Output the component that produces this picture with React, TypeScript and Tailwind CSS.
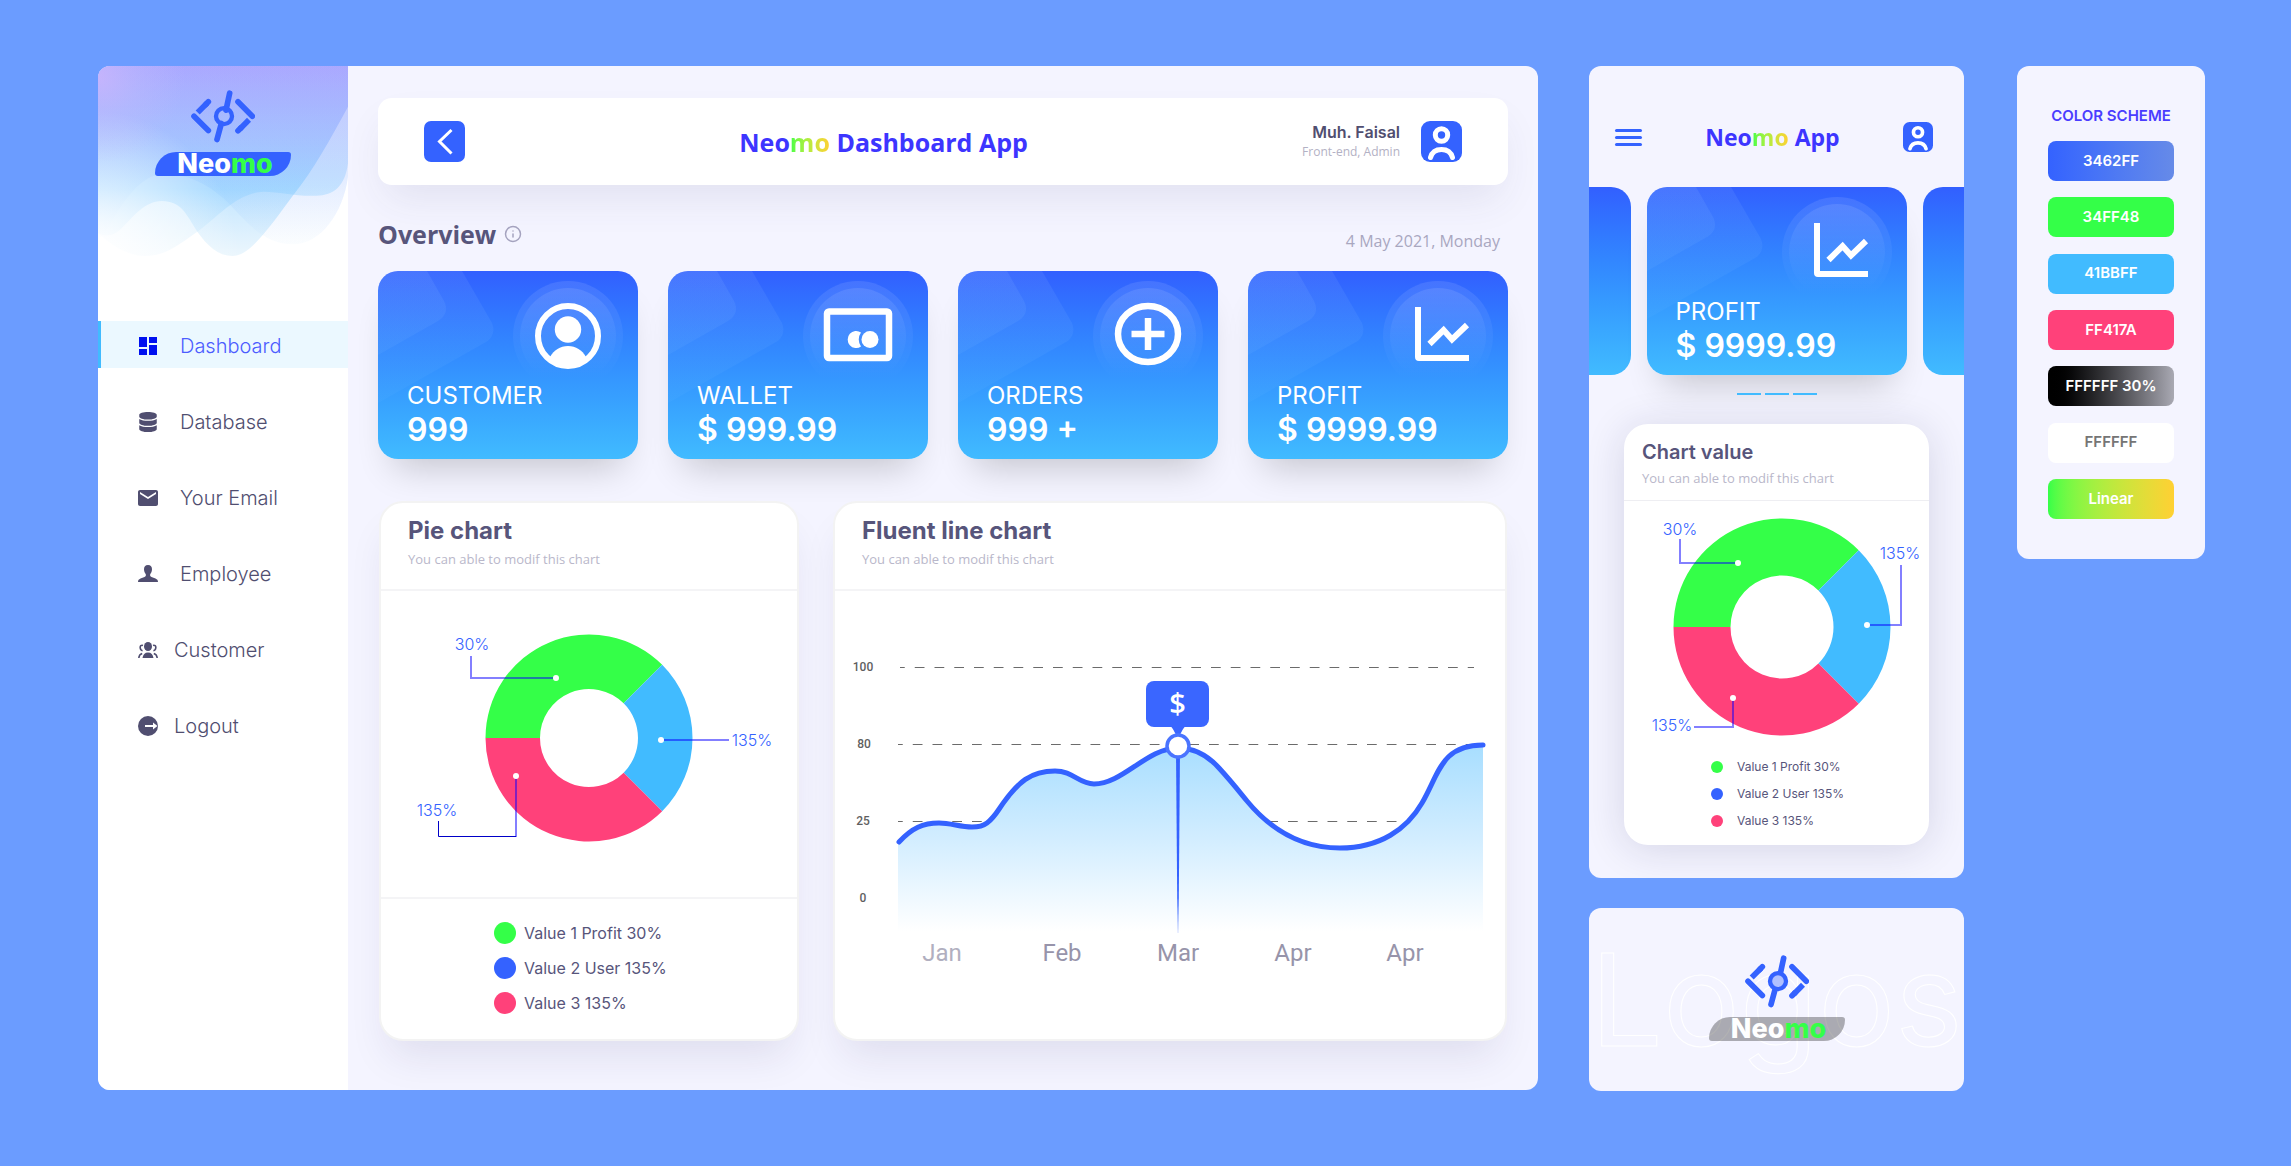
import React from "react";
import { MdDashboard, MdEmail } from "react-icons/md";
import { FaDatabase } from "react-icons/fa";
import { Info } from "lucide-react";

function LogoMark({ core }: { core: string }) {
  return (
    <svg viewBox="0 0 192 158" className="h-[53px] w-16" fill="none" stroke="#3462ff" strokeWidth="17" strokeLinecap="round">
      <path d="M116 9L105 60M91 100L78 148" />
      <circle cx="99" cy="78" r="24" strokeWidth="13" fill={core} />
      <path d="M52 35L44 43M52 121L9 78" />
      <path d="M48 39L20 67" strokeLinecap="butt" />
      <path d="M141 35L184 78M141 122L150 113" />
      <path d="M146 117L174 89" strokeLinecap="butt" />
    </svg>
  );
}

function Logo({ plate, core }: { plate: string; core: string }) {
  return (
    <div className="flex flex-col items-center">
      <LogoMark core={core} />
      <div className={"mt-[9px] flex h-6 w-[136px] items-center justify-center rounded-tl-[22px] rounded-tr-[3px] rounded-br-[22px] rounded-bl-[3px] pl-1 " + plate}>
        <span className="text-[27px] leading-6 font-extrabold text-white">
          Neo<span className="text-[#34ff48]">mo</span>
        </span>
      </div>
    </div>
  );
}

function SidebarWaves() {
  const a = "M24 18H774V140C720 240 670 330 610 405C540 500 480 588 428 588C385 588 350 555 322 515C290 465 275 423 215 423C165 423 130 470 95 505C70 530 45 530 24 520Z";
  const b = "M24 18H774V310C765 380 730 407 680 407C610 409 570 395 520 395C440 400 390 465 322 515C270 552 225 588 165 588C110 588 65 555 24 520Z";
  const c = "M24 18H774V350C760 460 690 553 610 553C510 553 460 470 400 415C350 370 290 340 215 343C140 348 85 450 45 520L24 540Z";
  return (
    <svg viewBox="24 18 750 570" className="block w-full" aria-hidden="true">
      <defs>
        <linearGradient id="wave" x1="0" y1="0" x2="0" y2="1">
          <stop offset="0" stopColor="#8a88ff" />
          <stop offset="0.4" stopColor="#80acff" />
          <stop offset="0.65" stopColor="#78c6ff" />
          <stop offset="1" stopColor="#d4ecfa" />
        </linearGradient>
        <linearGradient id="waveSoft" x1="0" y1="0" x2="0" y2="1">
          <stop offset="0" stopColor="#b9b4ff" />
          <stop offset="0.6" stopColor="#c9ccff" />
          <stop offset="1" stopColor="#ffffff" />
        </linearGradient>
        <radialGradient id="fadeLeft" gradientUnits="userSpaceOnUse" cx="0" cy="600" r="450">
          <stop offset="0" stopColor="#fff" />
          <stop offset="0.2" stopColor="#fff" stopOpacity="0.85" />
          <stop offset="1" stopColor="#fff" stopOpacity="0" />
        </radialGradient>
        <radialGradient id="blush" gradientUnits="userSpaceOnUse" cx="24" cy="50" r="260">
          <stop offset="0" stopColor="#ccb6fc" stopOpacity="0.8" />
          <stop offset="0.5" stopColor="#c4bafc" stopOpacity="0.35" />
          <stop offset="1" stopColor="#c4bafc" stopOpacity="0" />
        </radialGradient>
      </defs>
      <path d={c} fill="url(#waveSoft)" opacity="0.3" />
      <path d={b} fill="url(#wave)" opacity="0.32" />
      <path d={a} fill="url(#wave)" opacity="0.45" />
      <path d={c} fill="url(#wave)" opacity="0.1" />
      <rect x="24" y="18" width="750" height="570" fill="url(#fadeLeft)" />
      <rect x="24" y="18" width="750" height="570" fill="url(#blush)" />
    </svg>
  );
}

function EmployeeIcon() {
  return (
    <svg viewBox="0 0 20 17" width="20" height="17" fill="currentColor">
      <path d="M10 0C12.800 0 14 1.800 14 4.200C14 6.500 13 8 12.200 9.200C11.900 10.600 12.300 11.300 13.500 11.900L17.500 13.600C19.200 14.400 20 15.300 20 17H0C0 15.300 .8 14.400 2.500 13.600L6.500 11.900C7.700 11.300 8.100 10.600 7.800 9.200C7 8 6 6.500 6 4.200C6 1.800 7.200 0 10 0Z" />
    </svg>
  );
}

function CustomerIcon() {
  return (
    <svg viewBox="0 0 20 16" width="20" height="16" fill="currentColor">
      <ellipse cx="10" cy="4.500" rx="4" ry="4.500" />
      <path d="M4.500 16C5 12.500 6.800 10.500 10 10.500S15 12.500 15.500 16Z" />
      <path d="M5 3.400C3.200 2.800 2 4 2.200 5.800C2.300 7.300 3.200 8.500 4.600 8.700M15 3.400C16.800 2.800 18 4 17.800 5.800C17.700 7.300 16.800 8.500 15.400 8.700M.8 16C1 13.500 2.200 12 4.200 11.400M19.200 16C19 13.500 17.800 12 15.800 11.400" fill="none" stroke="currentColor" strokeWidth="1.600" />
    </svg>
  );
}

function LogoutIcon() {
  return (
    <svg viewBox="0 0 20 20" width="20" height="20">
      <circle cx="10" cy="10" r="10" fill="currentColor" />
      <path d="M7 9H15V6.500L19.500 10L15 13.500V11H7Z" fill="#fff" />
    </svg>
  );
}

const navItems = [
  { label: "Dashboard", icon: <MdDashboard size={24} color="#0010f0" />, active: true, tight: false },
  { label: "Database", icon: <FaDatabase size={20} />, active: false, tight: false },
  { label: "Your Email", icon: <MdEmail size={24} />, active: false, tight: false },
  { label: "Employee", icon: <EmployeeIcon />, active: false, tight: false },
  { label: "Customer", icon: <CustomerIcon />, active: false, tight: true },
  { label: "Logout", icon: <LogoutIcon />, active: false, tight: true },
];

function Sidebar() {
  return (
    <aside className="flex w-[250px] shrink-0 flex-col bg-white">
      <div className="relative">
        <SidebarWaves />
        <div className="absolute inset-x-0 top-6 flex justify-center">
          <Logo plate="bg-[#3462ff]" core="none" />
        </div>
      </div>
      <nav className="mt-[65px] flex flex-col gap-[29px]">
        {navItems.map((n) => (
          <a
            key={n.label}
            href="#"
            className={
              "flex h-[47px] items-center border-l-[3px] pt-0.5 pl-[35px] text-xl font-light " +
              (n.active ? "border-[#41bbff] bg-[#ebf8ff] text-[#4c5cff]" : "border-transparent text-[#504e70]")
            }
          >
            <span className="flex w-6 justify-center">{n.icon}</span>
            <span className={n.tight ? "ml-[14px]" : "ml-5"}>{n.label}</span>
          </a>
        ))}
      </nav>
    </aside>
  );
}

function Brand({ rest, className }: { rest: string; className: string }) {
  return (
    <h1 className={"font-['Open_Sans',sans-serif] font-bold text-[#3d35ff] " + className}>
      Neo
      <span className="bg-linear-to-r from-[#34ff48] to-[#ffd033] bg-clip-text text-transparent">mo</span> {rest}
    </h1>
  );
}

function Avatar({ className }: { className: string }) {
  return (
    <button aria-label="Profile" className={className}>
      <svg viewBox="0 0 41 41" className="block h-full w-full">
        <rect width="41" height="41" rx="9" fill="#3462ff" />
        <circle cx="20.500" cy="14" r="6.200" fill="none" stroke="#fff" strokeWidth="5" />
        <path d="M9.500 36.500C11 31 15 28.500 20.500 28.500S30 31 31.500 36.500" fill="none" stroke="#fff" strokeWidth="5" strokeLinecap="round" />
      </svg>
    </button>
  );
}

type IconName = "customer" | "wallet" | "orders" | "profit";

function StatArt({ icon }: { icon: IconName }) {
  return (
    <svg viewBox="0 0 260 188" className="absolute top-0 right-0 h-[188px] w-[260px]" aria-hidden="true">
      <defs>
        <linearGradient id="halo" x1="0" y1="0" x2="0" y2="1">
          <stop offset="0" stopColor="#fff" stopOpacity="0.1" />
          <stop offset="0.9" stopColor="#fff" stopOpacity="0" />
        </linearGradient>
      </defs>
      <circle cx="190" cy="65" r="55" fill="url(#halo)" />
      <circle cx="190" cy="65" r="48" fill="url(#halo)" />
      {icon === "customer" && (
        <g>
          <circle cx="190" cy="65" r="30" fill="none" stroke="#fff" strokeWidth="6" />
          <circle cx="190" cy="58.500" r="13.200" fill="#fff" />
          <path d="M172 86C176 79 182 75 190 75S204 79 208 86L206 92L190 97L174 92Z" fill="#fff" />
        </g>
      )}
      {icon === "wallet" && (
        <g>
          <rect x="159" y="40.500" width="62" height="46.500" rx="2" fill="none" stroke="#fff" strokeWidth="6.500" />
          <path d="M193 61.500A8.500 8.500 0 1 0 193 75.500A12 12 0 0 1 193 61.500Z" fill="#fff" />
          <circle cx="202" cy="68.500" r="8.500" fill="#fff" />
        </g>
      )}
      {icon === "orders" && (
        <g fill="none" stroke="#fff" strokeWidth="6.500">
          <ellipse cx="190" cy="63" rx="30" ry="28" />
          <path d="M190 47V79M173.500 63H206.500" />
        </g>
      )}
      {icon === "profit" && (
        <g fill="none" stroke="#fff" strokeWidth="6">
          <path d="M170 36V86Q170 87 171 87H221" />
          <path d="M181.500 73L195.600 59L204 68.500L219 54" />
        </g>
      )}
    </svg>
  );
}

function StatCard({ label, value, icon }: { label: string; value: string; icon: IconName }) {
  return (
    <article className="relative h-[188px] overflow-hidden rounded-[20px] bg-linear-to-b from-[#325fff] to-[#41bbff] text-white">
      <svg viewBox="0 0 260 188" className="absolute top-0 left-0 h-[188px] w-[260px]" aria-hidden="true">
        <defs>
          <linearGradient id="facet" gradientUnits="userSpaceOnUse" x1="0" y1="0" x2="0" y2="130">
            <stop offset="0" stopColor="#c8f0ff" stopOpacity="0.08" />
            <stop offset="1" stopColor="#c8f0ff" stopOpacity="0.03" />
          </linearGradient>
        </defs>
        <path d="M0 0H84L114 52C117 59 115 67 108 71L0 132Z" fill="url(#facet)" />
        <path d="M0 0H49L66 30C70 38 68 45 60 50L0 84Z" fill="url(#facet)" />
      </svg>
      <StatArt icon={icon} />
      <div className="relative pt-[110px] pl-[29px]">
        <p className="text-2xl leading-[30px]">{label}</p>
        <p className="text-[32px] leading-[38px] font-semibold whitespace-pre">{value}</p>
      </div>
    </article>
  );
}

const GREEN = "#34ff48";
const SKY = "#41bbff";
const PINK = "#ff417a";

function Donut({ outer, inner }: { outer: number; inner: number }) {
  const o = outer * Math.SQRT1_2;
  const i = inner * Math.SQRT1_2;
  return (
    <g>
      <path d={`M${-outer} 0A${outer} ${outer} 0 0 1 ${o} ${-o}L${i} ${-i}A${inner} ${inner} 0 0 0 ${-inner} 0Z`} fill={GREEN} />
      <path d={`M${o} ${-o}A${outer} ${outer} 0 0 1 ${o} ${o}L${i} ${i}A${inner} ${inner} 0 0 0 ${i} ${-i}Z`} fill={SKY} />
      <path d={`M${o} ${o}A${outer} ${outer} 0 0 1 ${-outer} 0H${-inner}A${inner} ${inner} 0 0 0 ${i} ${i}Z`} fill={PINK} />
    </g>
  );
}

function PieChart() {
  return (
    <svg viewBox="-208 -147 416 306" className="block w-full" role="img" aria-label="Pie chart">
      <Donut outer={103.5} inner={49} />
      <g fill="none" stroke="#0800ff" strokeOpacity="0.5" strokeWidth="2">
        <path d="M-118 -82V-60H-36" />
        <path d="M75 2H140" />
        <path d="M-73 99V41" />
      </g>
      <path d="M-150.500 83V98.500H-73" fill="none" stroke="#0000c8" />
      <g fill="#fff">
        <circle cx="-33" cy="-60" r="3" />
        <circle cx="72" cy="2" r="3" />
        <circle cx="-73" cy="38" r="3" />
      </g>
      <g fill="#3462ff" fontSize="16" fontWeight="300" textAnchor="middle">
        <text x="-117" y="-88">30%</text>
        <text x="163" y="8">135%</text>
        <text x="-152" y="78">135%</text>
      </g>
    </svg>
  );
}

function MobilePieChart() {
  return (
    <svg viewBox="-158 -126 305 248" className="block w-full" role="img" aria-label="Chart value">
      <Donut outer={108.5} inner={51.5} />
      <g fill="none" stroke="#0800ff" strokeOpacity="0.5" strokeWidth="2">
        <path d="M-102 -88V-64H-47" />
        <path d="M119 -62V-2H87" />
        <path d="M-88 100H-49V73" />
      </g>
      <g fill="#fff">
        <circle cx="-44" cy="-64" r="3" />
        <circle cx="85" cy="-2" r="3" />
        <circle cx="-49" cy="71" r="3" />
      </g>
      <g fill="#3462ff" fontSize="16" fontWeight="300" textAnchor="middle">
        <text x="-102" y="-92">30%</text>
        <text x="118" y="-68">135%</text>
        <text x="-110" y="104">135%</text>
      </g>
    </svg>
  );
}

const curve =
  "M64 251C77 237 88 232 104 232C116 232 125 236 137 236C143 236 148 235 152 232C160 226 163 219 169 211C183 192 195 180 220 180C238 180 244 193 259 193C288 193 312 157 343 157C362 157 375 167 384 177C396 190 403 199 412 210C436 239 466 257 505 257C545 257 572 238 587 212C604 183 606 154 648 154";

function LineChart() {
  return (
    <svg viewBox="0 0 670 448" className="block w-full" role="img" aria-label="Fluent line chart">
      <defs>
        <linearGradient id="area" gradientUnits="userSpaceOnUse" x1="0" y1="155" x2="0" y2="340">
          <stop offset="0" stopColor="#a8deff" />
          <stop offset="0.5" stopColor="#d2edff" />
          <stop offset="1" stopColor="#ffffff" />
        </linearGradient>
        <linearGradient id="needle" gradientUnits="userSpaceOnUse" x1="0" y1="164" x2="0" y2="342">
          <stop offset="0.800" stopColor="#3462ff" />
          <stop offset="1" stopColor="#3462ff" stopOpacity="0.2" />
        </linearGradient>
      </defs>
      <g stroke="#6b6b6b" strokeWidth="1" strokeDasharray="9.750 10" strokeDashoffset="5">
        <path d="M65 76.500H639" />
        <path d="M63 153.500H636" />
        <path d="M63 230.500H600" />
      </g>
      <path d={curve + "V342H63V251Z"} fill="url(#area)" />
      <path d="M341 160H345L343.500 342H342.500Z" fill="url(#needle)" />
      <path d={curve} fill="none" stroke="#3462ff" strokeWidth="5" strokeLinecap="round" />
      <rect x="311" y="90" width="63" height="46" rx="8" fill="#3a66ff" />
      <path d="M335 135C339 137 340 145 343 145S347 137 351 135Z" fill="#3a66ff" />
      <circle cx="343" cy="155" r="11" fill="#fff" stroke="#4a74ff" strokeWidth="3.500" />
      <text x="342.500" y="123" fontSize="29" fontWeight="600" fill="#fff" textAnchor="middle" className="font-['Open_Sans',sans-serif]">$</text>
      <g fontSize="12" fontWeight="500" fill="#5f5f5f" textAnchor="middle" className="font-['Roboto',sans-serif]">
        <text x="28" y="80">100</text>
        <text x="29" y="157">80</text>
        <text x="28" y="234">25</text>
        <text x="28" y="311">0</text>
      </g>
      <g fontSize="24" fill="#9794aa" textAnchor="middle" className="font-['Roboto',sans-serif]">
        <text x="107" y="370" fill="#b1afc0">Jan</text>
        <text x="227" y="370">Feb</text>
        <text x="343" y="370">Mar</text>
        <text x="458" y="370">Apr</text>
        <text x="570" y="370">Apr</text>
      </g>
    </svg>
  );
}

const legend = [
  { label: "Value 1 Profit 30%", dot: "bg-[#34ff48]" },
  { label: "Value 2 User 135%", dot: "bg-[#3462ff]" },
  { label: "Value 3 135%", dot: "bg-[#ff417a]" },
];

function Panel({ title, children }: { title: string; children: React.ReactNode }) {
  return (
    <section className="rounded-3xl border-2 border-[#f3f3f3] bg-white shadow-[0_24px_40px_-10px_rgba(40,30,90,0.1)]">
      <header className="border-b-2 border-[#f4f4f6] px-[27px] pt-3.5 pb-5">
        <h2 className="text-2xl leading-7 font-bold text-[#57557b]">{title}</h2>
        <p className="mt-1 font-['Open_Sans',sans-serif] text-[13px] leading-5 text-[#b9b7ca]">You can able to modif this chart</p>
      </header>
      {children}
    </section>
  );
}

function Dashboard() {
  return (
    <main className="flex min-w-0 flex-1 overflow-hidden rounded-xl bg-[#f4f4ff]">
      <Sidebar />
      <div className="min-w-0 flex-1 px-[30px] pt-8 pb-[49px]">
        <header className="flex h-[87px] items-center justify-between rounded-[14px] bg-white pr-[46px] pl-[46px] shadow-[0_20px_40px_-8px_rgba(60,60,110,0.1)]">
          <button aria-label="Back" className="flex size-[41px] items-center justify-center rounded-[7px] bg-[#3462ff]">
            <svg viewBox="0 0 41 41" className="size-full" fill="none" stroke="#fff" strokeWidth="3">
              <path d="M27.500 9L15.500 20.500L27.500 32.500" />
            </svg>
          </button>
          <Brand rest="Dashboard App" className="text-[25px] leading-9" />
          <div className="flex items-center gap-[21px]">
            <div className="text-right">
              <p className="text-base leading-5 font-semibold text-[#504e70]">Muh. Faisal</p>
              <p className="font-['Open_Sans',sans-serif] text-xs leading-5 text-[#b3b1c4]">Front-end, Admin</p>
            </div>
            <Avatar className="size-[41px]" />
          </div>
        </header>

        <div className="mt-8 mb-5 flex items-end justify-between">
          <div className="flex items-center gap-2">
            <h2 className="font-['Open_Sans',sans-serif] text-[25px] leading-[34px] font-bold text-[#57557b]">Overview</h2>
            <Info size={18} strokeWidth={2} color="#a5a3bf" />
          </div>
          <p className="pr-2 font-['Open_Sans',sans-serif] text-base leading-5 text-[#a9a7bf]">4 May 2021, Monday</p>
        </div>

        <div className="grid grid-cols-4 gap-[30px]">
          {(
            [
              ["CUSTOMER", "999", "customer"],
              ["WALLET", "$ 999.99", "wallet"],
              ["ORDERS", "999 +", "orders"],
              ["PROFIT", "$ 9999.99", "profit"],
            ] as [string, string, IconName][]
          ).map(([label, value, icon]) => (
            <div key={label} className="rounded-[20px] shadow-[0_24px_36px_-16px_rgba(0,0,0,0.2)]">
              <StatCard label={label} value={value} icon={icon} />
            </div>
          ))}
        </div>

        <div className="mt-[42px] grid grid-cols-[420fr_674fr] gap-[34px] px-px">
          <Panel title="Pie chart">
            <PieChart />
            <ul className="flex flex-col gap-[11px] border-t-2 border-[#f4f4f6] pt-[22px] pb-[22px] pl-[113px]">
              {legend.map((l) => (
                <li key={l.label} className="flex items-center gap-2 text-base leading-6 text-[#57557b]">
                  <span className={"size-[22px] rounded-full " + l.dot} />
                  {l.label}
                </li>
              ))}
            </ul>
          </Panel>
          <Panel title="Fluent line chart">
            <LineChart />
          </Panel>
        </div>
      </div>
    </main>
  );
}

function Phone() {
  return (
    <section className="overflow-hidden rounded-xl bg-[#f4f4ff] pt-14 pb-[33px]">
      <header className="flex h-[30px] items-center justify-between pr-[31px] pl-[26px]">
        <button aria-label="Menu" className="flex w-[27px] flex-col gap-1">
          <span className="h-[3px] rounded-full bg-[#3462ff]" />
          <span className="h-[3px] rounded-full bg-[#3462ff]" />
          <span className="h-[3px] rounded-full bg-[#3462ff]" />
        </button>
        <Brand rest="App" className="text-[23px] leading-7" />
        <Avatar className="size-[30px]" />
      </header>
      <div className="mt-[35px] flex justify-center gap-4">
        <div className="h-[188px] w-[260px] shrink-0 rounded-[20px] bg-linear-to-b from-[#325fff] to-[#41bbff]" />
        <div className="w-[260px] shrink-0 rounded-[20px] shadow-[0_24px_36px_-16px_rgba(0,0,0,0.2)]">
          <StatCard label="PROFIT" value="$ 9999.99" icon="profit" />
        </div>
        <div className="h-[188px] w-[260px] shrink-0 rounded-[20px] bg-linear-to-b from-[#325fff] to-[#41bbff]" />
      </div>
      <div className="relative mt-[18px] flex justify-center gap-1">
        <span className="h-0.5 w-6 bg-[#41bbff]" />
        <span className="h-0.5 w-6 bg-[#41bbff]" />
        <span className="h-0.5 w-6 bg-[#41bbff]" />
      </div>
      <div className="mx-[35px] mt-[29px] rounded-3xl bg-white pb-[14px] shadow-[0_4px_40px_rgba(30,25,80,0.14)]">
        <header className="border-b border-[#eeeef2] px-[18px] pt-3.5 pb-3">
          <h2 className="text-xl leading-7 font-semibold text-[#57557b]">Chart value</h2>
          <p className="mt-0.5 font-['Open_Sans',sans-serif] text-[13px] leading-5 text-[#b9b7ca]">You can able to modif this chart</p>
        </header>
        <MobilePieChart />
        <ul className="flex flex-col gap-[7px] pt-2 pl-[87px]">
          {legend.map((l) => (
            <li key={l.label} className="flex items-center gap-[14px] text-xs leading-5 text-[#57557b]">
              <span className={"size-3 rounded-full " + l.dot} />
              {l.label}
            </li>
          ))}
        </ul>
      </div>
    </section>
  );
}

function LogoSheet() {
  return (
    <section className="relative flex h-[183px] items-start justify-center overflow-hidden rounded-xl bg-[#f4f4ff] pt-[47px]">
      <span
        aria-hidden="true"
        className="absolute inset-x-0 top-[14px] text-center text-[128px] leading-[156px] text-transparent [-webkit-text-stroke:1px_white]"
      >
        Logos
      </span>
      <div className="relative">
        <Logo plate="bg-black/30" core="#b0c0ff" />
      </div>
    </section>
  );
}

const swatches = [
  { label: "3462FF", style: "bg-linear-to-r from-[#3462ff] to-[#668ae8] text-white" },
  { label: "34FF48", style: "bg-[#34ff48] text-white" },
  { label: "41BBFF", style: "bg-[#41bbff] text-white" },
  { label: "FF417A", style: "bg-[#ff417a] text-white" },
  { label: "FFFFFF 30%", style: "bg-linear-to-r from-black to-[#a9a9b3] text-white" },
  { label: "FFFFFF", style: "bg-white text-[#757575]" },
  { label: "Linear", style: "bg-linear-to-r from-[#34ff48] to-[#ffd033] text-white" },
];

function Palette() {
  return (
    <aside className="w-[188px] shrink-0 rounded-xl bg-[#f4f4ff] px-[31px] pt-10 pb-10">
      <h2 className="text-center text-[15px] leading-5 font-semibold whitespace-nowrap text-[#4a3dff]">COLOR SCHEME</h2>
      <ul className="mt-[15px] flex h-[378px] flex-col justify-between">
        {swatches.map((s) => (
          <li key={s.label} className={"flex h-10 items-center justify-center rounded-lg text-[15px] font-semibold " + s.style}>
            {s.label}
          </li>
        ))}
      </ul>
    </aside>
  );
}

export default function App() {
  return (
    <div className="flex min-h-screen items-start bg-[#6b9cff] pt-[66px] pr-[86px] pb-[74px] pl-[98px] font-['Inter',sans-serif]">
      <Dashboard />
      <div className="ml-[51px] flex w-[375px] shrink-0 flex-col gap-[30px]">
        <Phone />
        <LogoSheet />
      </div>
      <div className="ml-[53px] flex shrink-0">
        <Palette />
      </div>
    </div>
  );
}
